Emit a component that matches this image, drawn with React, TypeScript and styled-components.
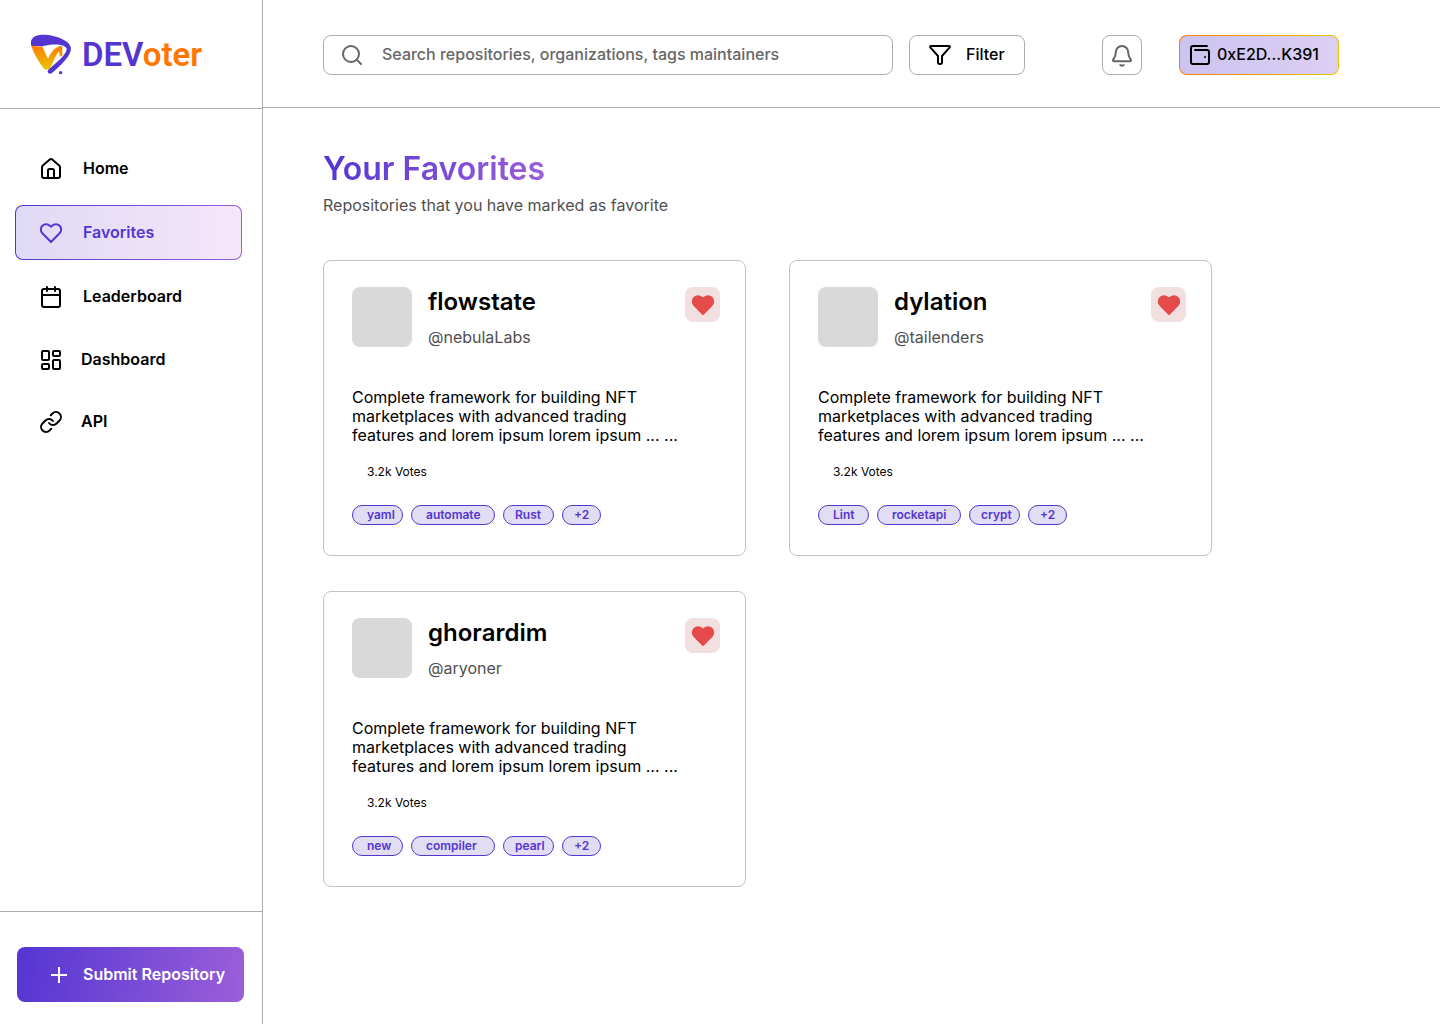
import React from "react";
import styled, { createGlobalStyle, css } from "styled-components";
import { Calendar, LayoutDashboard, Link, Search } from "lucide-react";

const GlobalStyle = createGlobalStyle`
  *, *::before, *::after { box-sizing: border-box; }
  body {
    margin: 0;
    background: #fff;
    color: #000;
    font-family: Inter, "Liberation Sans", sans-serif;
    font-size: 16px;
    line-height: 19px;
  }
  h1, h2, p, ul { margin: 0; padding: 0; }
  ul { list-style: none; }
  button, input { font: inherit; color: inherit; }
  button { cursor: pointer; }
`;

const violet = "#5435d2";
const rule = "1px solid #acacac";

const Shell = styled.div`
  display: grid;
  grid-template-columns: 263px minmax(0, 1fr);
  min-height: 100vh;
`;

const Sidebar = styled.aside`
  display: flex;
  flex-direction: column;
  border-right: ${rule};
`;

const Brand = styled.a`
  display: flex;
  align-items: center;
  gap: 9px;
  height: 109px;
  padding: 2px 0 0 31px;
  border-bottom: ${rule};
  text-decoration: none;
`;

const Wordmark = styled.span`
  color: ${violet};
  font-family: Roboto, "Liberation Sans", sans-serif;
  font-size: 33px;
  font-weight: 600;
  line-height: 40px;
  span { color: #ff7500; }
`;

const Nav = styled.nav`
  flex: 1;
  padding: 32px 20px 32px 15px;
`;

const NavList = styled.ul`
  display: flex;
  flex-direction: column;
  gap: 9px;
`;

const NavLink = styled.a<{ $active?: boolean; $compact?: boolean }>`
  display: flex;
  align-items: center;
  gap: ${(p) => (p.$compact ? 18 : 20)}px;
  height: ${(p) => (p.$compact ? 53 : 55)}px;
  padding-left: 23px;
  border: 1px solid transparent;
  border-radius: 8px;
  color: #000;
  font-weight: 600;
  text-decoration: none;
  ${(p) =>
    p.$active &&
    css`
      color: ${violet};
      background:
        linear-gradient(90deg, #dfdaf6, #f5e6fa) padding-box,
        linear-gradient(90deg, ${violet}, #9b5fd9) border-box;
    `}
`;

const SidebarFooter = styled.div`
  padding: 35px 18px 22px 17px;
  border-top: ${rule};
`;

const SubmitButton = styled.button`
  display: flex;
  align-items: center;
  gap: 12px;
  width: 100%;
  height: 55px;
  padding: 0 0 0 30px;
  border: 0;
  border-radius: 8px;
  background: linear-gradient(100deg, ${violet}, #9b5fd9);
  color: #fff;
  font-weight: 600;
  white-space: nowrap;
`;

const TopBar = styled.header`
  display: flex;
  align-items: center;
  height: 108px;
  padding: 2px 101px 0 60px;
  border-bottom: ${rule};
`;

const SearchBox = styled.label`
  display: flex;
  flex: 1;
  align-items: center;
  gap: 18px;
  min-width: 0;
  height: 40px;
  padding: 0 16px;
  border: ${rule};
  border-radius: 8px;
  color: #666;
  font-weight: 500;
  svg { flex: none; }
`;

const SearchInput = styled.input`
  flex: 1;
  min-width: 0;
  padding: 0;
  border: 0;
  outline: 0;
  background: none;
  &::placeholder { color: #666; opacity: 1; }
`;

const FilterButton = styled.button`
  display: flex;
  align-items: center;
  gap: 14px;
  width: 116px;
  height: 40px;
  margin-left: 16px;
  padding: 0 0 0 18px;
  border: ${rule};
  border-radius: 8px;
  background: #fff;
  font-weight: 500;
`;

const BellButton = styled.button`
  display: grid;
  place-items: center;
  width: 40px;
  height: 40px;
  margin-left: 77px;
  padding: 0;
  border: ${rule};
  border-radius: 8px;
  background: #fff;
  color: #666;
`;

const WalletButton = styled.button`
  display: flex;
  align-items: center;
  gap: 5px;
  width: 160px;
  height: 40px;
  margin-left: 37px;
  padding: 0 0 0 8px;
  border: 1px solid transparent;
  border-radius: 8px;
  background:
    linear-gradient(90deg, #ccc3f1, #dccff2) padding-box,
    linear-gradient(90deg, #ff7a00, #e5c800) border-box;
  font-weight: 500;
`;

const Content = styled.main`
  padding: 40px 60px;
`;

const Title = styled.h1`
  width: fit-content;
  background: linear-gradient(100deg, ${violet}, #9b5fd9);
  background-clip: text;
  color: transparent;
  font-size: 32px;
  font-weight: 600;
  line-height: 42px;
`;

const Subtitle = styled.p`
  margin-top: 6px;
  color: #4f4f4f;
`;

const CardGrid = styled.section`
  display: grid;
  grid-template-columns: repeat(auto-fit, minmax(380px, 1fr));
  gap: 35px 43px;
  max-width: 889px;
  margin-top: 45px;
`;

const Card = styled.article`
  padding: 26px 25px 30px 28px;
  border: 1px solid #c4c4c4;
  border-radius: 8px;
`;

const CardHead = styled.div`
  display: flex;
  align-items: flex-start;
  gap: 16px;
`;

const Avatar = styled.div`
  width: 60px;
  height: 60px;
  border-radius: 8px;
  background: #d9d9d9;
`;

const Identity = styled.div`
  flex: 1;
`;

const RepoName = styled.h2`
  font-size: 24px;
  font-weight: 600;
  line-height: 29px;
`;

const Owner = styled.p`
  margin-top: 12px;
  color: #4f4f4f;
`;

const LikeButton = styled.button`
  display: grid;
  place-items: center;
  width: 35px;
  height: 35px;
  padding: 0;
  border: 0;
  border-radius: 8px;
  background: #f2e0e1;
  color: #e54b4b;
`;

const Description = styled.p`
  max-width: 330px;
  margin-top: 41px;
`;

const Votes = styled.p`
  margin-top: 19px;
  padding-left: 15px;
  font-size: 12px;
  line-height: 15px;
`;

const Tags = styled.ul`
  display: flex;
  gap: 8px;
  margin-top: 26px;
`;

const tagShapes = {
  first: css`min-width: 51px; padding-left: 14px;`,
  wide: css`min-width: 84px; padding-left: 14px;`,
  third: css`min-width: 51px; padding-left: 11px;`,
  more: css`min-width: 39px; padding-left: 11px;`,
};

const Tag = styled.li<{ $shape: keyof typeof tagShapes }>`
  height: 20px;
  border: 1px solid ${violet};
  border-radius: 10px;
  background: #e1ddf2;
  color: ${violet};
  font-size: 12px;
  font-weight: 600;
  line-height: 18px;
  ${(p) => tagShapes[p.$shape]}
`;

const shapeOrder: (keyof typeof tagShapes)[] = ["first", "wide", "third", "more"];

const Logo = () => (
  <svg width="42" height="42" viewBox="15 14 126 126" aria-hidden="true">
    <defs>
      <linearGradient id="logoFlame" x1="0" y1="0" x2="0" y2="1">
        <stop offset="0" stopColor="#ff7a00" />
        <stop offset="1" stopColor="#e5c800" />
      </linearGradient>
    </defs>
    <path
      d="M15 50C12 26 24 16 52 16c34 0 83 18 83 41 0 21-27 49-57 74-8 6-18-3-10-11 24-21 54-44 54-61 0-13-38-19-72-8Z"
      fill={violet}
    />
    <path
      d="M15 48c12 4 23 4 33 3l18 37c8-18 21-36 38-38 6 0 5 6 5 12v16c-2 5-7 4-8 0l-2-12c-7 8-15 26-25 48-6 9-16 9-22 2-14-18-30-46-37-68Z"
      fill="url(#logoFlame)"
    />
    <circle cx="104" cy="130" r="5" fill={violet} />
  </svg>
);

const LineIcon = ({ fill = "none", children }: { fill?: string; children: React.ReactNode }) => (
  <svg
    width="24"
    height="24"
    viewBox="0 0 24 24"
    fill={fill}
    stroke="currentColor"
    strokeWidth="2"
    strokeLinecap="round"
    strokeLinejoin="round"
    aria-hidden="true"
  >
    {children}
  </svg>
);

const HomeIcon = () => (
  <LineIcon>
    <path d="M3 10.2c0-.7.3-1.3.8-1.7l7-6a1.8 1.8 0 0 1 2.4 0l7 6c.5.4.8 1 .8 1.7V19a2 2 0 0 1-2 2H5a2 2 0 0 1-2-2Z" />
    <path d="M9 21v-7.5a1.5 1.5 0 0 1 1.5-1.5h3a1.5 1.5 0 0 1 1.5 1.5V21" />
  </LineIcon>
);

const HeartIcon = ({ fill }: { fill?: string }) => (
  <LineIcon fill={fill}>
    <path d="M12 21 3.4 12.2a5.2 5.2 0 0 1 7.4-7.5L12 5.6l1.2-.9a5.2 5.2 0 0 1 7.4 7.5Z" />
  </LineIcon>
);

const FilterIcon = () => (
  <LineIcon>
    <path d="M2.9 3h18.2c.8 0 1.1.8.6 1.4L14 13v6.5a1.5 1.5 0 0 1-1.5 1.5h-.8a1.7 1.7 0 0 1-1.7-1.7V13L2.3 4.4C1.8 3.8 2.1 3 2.9 3Z" />
  </LineIcon>
);

const BellIcon = () => (
  <LineIcon>
    <path d="M12 3a6.2 6.2 0 0 0-6.2 6.2c0 4-1.3 5.5-2.6 7.4-.5.8 0 1.6.8 1.6h16c.8 0 1.3-.8.8-1.6-1.3-1.9-2.6-3.4-2.6-7.4A6.2 6.2 0 0 0 12 3Z" />
    <path d="M10.3 22c1 .8 2.4.8 3.4 0" />
  </LineIcon>
);

const WalletIcon = () => (
  <LineIcon>
    <path d="M19 3H5a2 2 0 0 0-2 2v14a2 2 0 0 0 2 2h14a2 2 0 0 0 2-2V9a2 2 0 0 0-2-2H7" />
    <path d="M17 14h0" />
  </LineIcon>
);

const PlusIcon = () => (
  <svg width="24" height="24" viewBox="0 0 24 24" stroke="currentColor" strokeWidth="2" aria-hidden="true">
    <path d="M12 4v16M4 12h16" />
  </svg>
);

const navItems = [
  { label: "Home", icon: <HomeIcon /> },
  { label: "Favorites", icon: <HeartIcon />, active: true },
  { label: "Leaderboard", icon: <Calendar size={24} /> },
  { label: "Dashboard", icon: <LayoutDashboard size={24} />, compact: true },
  { label: "API", icon: <Link size={24} />, compact: true },
];

const summary =
  "Complete framework for building NFT marketplaces with advanced trading features and lorem ipsum lorem ipsum ... ...";

const repos = [
  { name: "flowstate", owner: "@nebulaLabs", tags: ["yaml", "automate", "Rust", "+2"] },
  { name: "dylation", owner: "@tailenders", tags: ["Lint", "rocketapi", "crypt", "+2"] },
  { name: "ghorardim", owner: "@aryoner", tags: ["new", "compiler", "pearl", "+2"] },
];

export default function App() {
  return (
    <>
      <GlobalStyle />
      <Shell>
        <Sidebar>
          <Brand href="#">
            <Logo />
            <Wordmark>DEV<span>oter</span></Wordmark>
          </Brand>
          <Nav>
            <NavList>
              {navItems.map(({ label, icon, active, compact }) => (
                <li key={label}>
                  <NavLink href="#" $active={active} $compact={compact}>
                    {icon}
                    {label}
                  </NavLink>
                </li>
              ))}
            </NavList>
          </Nav>
          <SidebarFooter>
            <SubmitButton type="button">
              <PlusIcon />
              Submit Repository
            </SubmitButton>
          </SidebarFooter>
        </Sidebar>
        <div>
          <TopBar>
            <SearchBox>
              <Search size={24} />
              <SearchInput
                type="text"
                aria-label="Search"
                placeholder="Search repositories, organizations, tags maintainers"
              />
            </SearchBox>
            <FilterButton type="button">
              <FilterIcon />
              Filter
            </FilterButton>
            <BellButton type="button" aria-label="Notifications">
              <BellIcon />
            </BellButton>
            <WalletButton type="button">
              <WalletIcon />
              0xE2D...K391
            </WalletButton>
          </TopBar>
          <Content>
            <Title>Your Favorites</Title>
            <Subtitle>Repositories that you have marked as favorite</Subtitle>
            <CardGrid>
              {repos.map((repo) => (
                <Card key={repo.name}>
                  <CardHead>
                    <Avatar />
                    <Identity>
                      <RepoName>{repo.name}</RepoName>
                      <Owner>{repo.owner}</Owner>
                    </Identity>
                    <LikeButton type="button" aria-label={`Unfavorite ${repo.name}`}>
                      <HeartIcon fill="currentColor" />
                    </LikeButton>
                  </CardHead>
                  <Description>{summary}</Description>
                  <Votes>3.2k Votes</Votes>
                  <Tags>
                    {repo.tags.map((tag, i) => (
                      <Tag key={tag} $shape={shapeOrder[i]}>{tag}</Tag>
                    ))}
                  </Tags>
                </Card>
              ))}
            </CardGrid>
          </Content>
        </div>
      </Shell>
    </>
  );
}
